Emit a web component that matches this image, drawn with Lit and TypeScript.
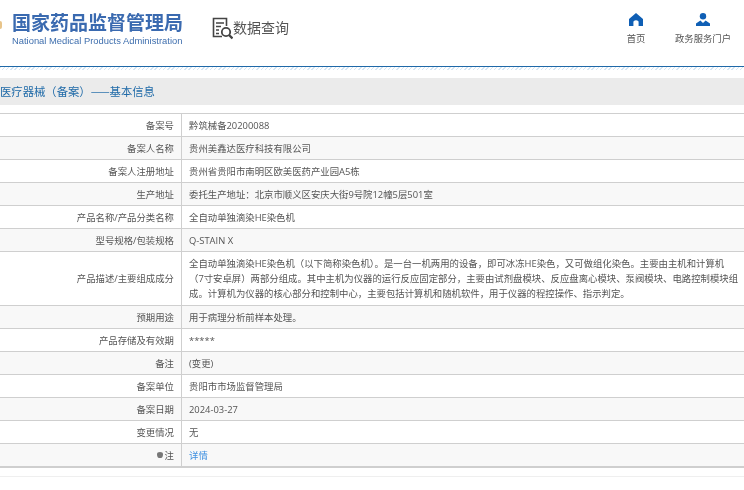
import { LitElement, html, css } from 'lit';
import { customElement } from 'lit/decorators.js';

const ROWS: [string, string][] = [
  ['备案号', '黔筑械备20200088'],
  ['备案人名称', '贵州美鑫达医疗科技有限公司'],
  ['备案人注册地址', '贵州省贵阳市南明区欧美医药产业园A5栋'],
  ['生产地址', '委托生产地址：北京市顺义区安庆大街9号院12幢5层501室'],
  ['产品名称/产品分类名称', '全自动单独滴染HE染色机'],
  ['型号规格/包装规格', 'Q-STAIN X'],
  [
    '产品描述/主要组成成分',
    '全自动单独滴染HE染色机（以下简称染色机）。是一台一机两用的设备，即可冰冻HE染色，又可做组化染色。主要由主机和计算机\n（7寸安卓屏）两部分组成。其中主机为仪器的运行反应固定部分，主要由试剂盘模块、反应盘离心模块、泵阀模块、电路控制模块组\n成。计算机为仪器的核心部分和控制中心，主要包括计算机和随机软件，用于仪器的程控操作、指示判定。',
  ],
  ['预期用途', '用于病理分析前样本处理。'],
  ['产品存储及有效期', '*****'],
  ['备注', '(变更)'],
  ['备案单位', '贵阳市市场监督管理局'],
  ['备案日期', '2024-03-27'],
  ['变更情况', '无'],
];

@customElement('app-root')
export class AppRoot extends LitElement {
  static styles = css`
    :host {
      display: block;
      width: 744px;
      height: 490px;
      overflow: hidden;
      background: #fff;
      font-family: 'Open Sans', 'Noto Sans CJK SC', sans-serif;
      color: #555;
      filter: blur(0.25px);
    }

    .header {
      height: 66px;
      display: flex;
      box-sizing: border-box;
    }

    .emblem {
      width: 2px;
      height: 8px;
      margin-top: 21px;
      background: #e8c48a;
      border-radius: 0 4px 4px 0;
    }

    .brand {
      margin-left: 10px;
      width: 172px;
      padding-top: 11px;
    }

    .brand-cn {
      font-family: 'Noto Sans CJK SC', sans-serif;
      font-size: 19px;
      line-height: 22px;
      font-weight: 700;
      color: #3a6ab0;
      white-space: nowrap;
    }

    .brand-en {
      font-family: 'Liberation Sans', sans-serif;
      font-size: 9.4px;
      line-height: 12px;
      margin-top: 2px;
      color: #3f6fae;
      white-space: nowrap;
    }

    .query {
      margin-left: 28px;
      padding-top: 17px;
      display: flex;
      align-items: flex-start;
    }

    .query svg {
      display: block;
    }

    .query span {
      font-family: 'Noto Sans CJK SC', sans-serif;
      font-size: 14px;
      line-height: 20px;
      color: #555;
      white-space: nowrap;
    }

    .nav {
      margin-left: auto;
      display: flex;
      padding-top: 13px;
      padding-right: 13px;
      gap: 29.6px;
    }

    .nav-item {
      display: flex;
      flex-direction: column;
      align-items: center;
      font-family: 'Noto Sans CJK SC', sans-serif;
      font-size: 9.33px;
      line-height: 12px;
      color: #555;
      gap: 6px;
    }

    .rule {
      height: 1px;
      background: #1f69a8;
    }

    .hatch {
      height: 3px;
      background: repeating-linear-gradient(135deg, #d6e6f4 0 1px, #fff 1px 3px);
    }

    .title {
      margin-top: 8px;
      height: 27px;
      background: #ebebeb;
      font-family: 'Noto Sans CJK SC', sans-serif;
      font-size: 11.33px;
      line-height: 27px;
      color: #1f6aa8;
      white-space: nowrap;
    }

    .table {
      margin-top: 8px;
      border-top: 1px solid #cfcfcf;
      border-bottom: 1px solid #cfcfcf;
      box-shadow: 0 1px 0 #cfcfcf;
    }

    .row {
      display: grid;
      grid-template-columns: 181px 1fr;
      min-height: 22px;
      border-top: 1px solid #cfcfcf;
      font-size: 9.4px;
      line-height: 15px;
    }

    .row:first-child {
      border-top: 0;
    }

    .row:nth-child(even) {
      background: #f8f8f8;
    }

    .label {
      display: flex;
      align-items: center;
      justify-content: flex-end;
      padding-right: 7px;
      white-space: nowrap;
    }

    .value {
      display: flex;
      align-items: center;
      border-left: 1px solid #cfcfcf;
      padding: 0 7px;
      white-space: pre;
    }

    .value.multi {
      padding-top: 4px;
      padding-bottom: 4px;
    }

    .value a {
      color: #3d8fe0;
      text-decoration: none;
    }

    .dot {
      display: inline-block;
      width: 6px;
      height: 6px;
      border-radius: 50% 50% 50% 50% / 40% 40% 60% 60%;
      background: #777;
      margin-right: 2px;
    }

    .foot {
      margin-top: 9px;
      height: 1px;
      background: #efefef;
    }
  `;

  render() {
    return html`
      <div class="header">
        <div class="emblem"></div>
        <div class="brand">
          <div class="brand-cn">国家药品监督管理局</div>
          <div class="brand-en">National Medical Products Administration</div>
        </div>
        <div class="query">
          <svg width="21" height="23" viewBox="0 0 21 23" fill="none" stroke="#444">
            <path d="M10 19.5H1.5V1.5H14.5V9" stroke-width="1.6" />
            <path d="M4 6H12M4 9.5H9M4 13H7M4 16.5H7" stroke-width="1.4" />
            <circle cx="14" cy="15" r="4.2" stroke-width="1.8" />
            <path d="M17 18L20.5 21.5" stroke-width="2.4" />
          </svg>
          <span>数据查询</span>
        </div>
        <div class="nav">
          <div class="nav-item">
            <svg width="14" height="13" viewBox="0 0 14 13">
              <path fill="#0f5fb5" d="M7 0L14 6V13H9.6V8.4Q7 6.2 4.4 8.4V13H0V6Z" />
            </svg>
            <span>首页</span>
          </div>
          <div class="nav-item">
            <svg width="14" height="13" viewBox="0 0 14 13">
              <circle cx="7" cy="3.2" r="3.2" fill="#0f5fb5" />
              <path fill="#0f5fb5" d="M0 13V10.5L4.4 7.4L7 10L9.6 7.4L14 10.5V13Z" />
            </svg>
            <span>政务服务门户</span>
          </div>
        </div>
      </div>
      <div class="rule"></div>
      <div class="hatch"></div>
      <div class="title">医疗器械（备案）——基本信息</div>
      <div class="table">
        ${ROWS.map(
          ([label, value]) => html`
            <div class="row">
              <div class="label">${label}</div>
              <div class="value ${value.includes('\n') ? 'multi' : ''}"><span>${value}</span></div>
            </div>
          `
        )}
        <div class="row">
          <div class="label"><i class="dot"></i>注</div>
          <div class="value"><a href="#">详情</a></div>
        </div>
      </div>
      <div class="foot"></div>
    `;
  }
}
